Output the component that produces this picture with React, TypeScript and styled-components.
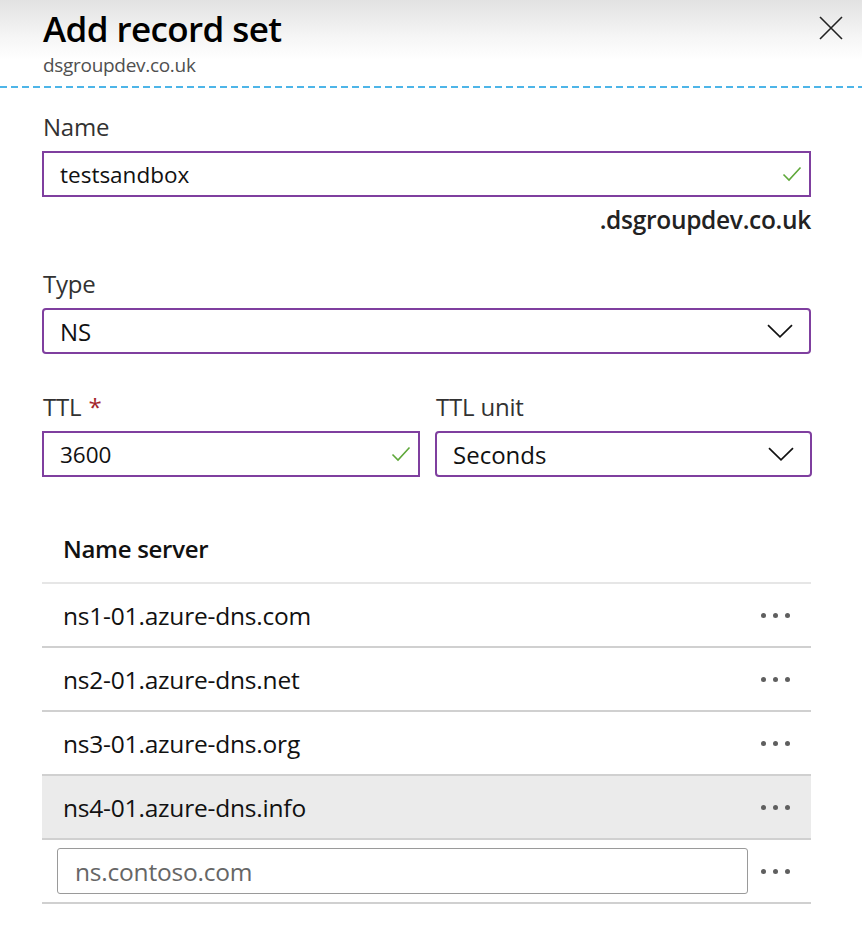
import React from "react";
import styled, { createGlobalStyle } from "styled-components";

const Global = createGlobalStyle`
  html, body { margin: 0; padding: 0; background: #fff; }
  body { font-family: "Open Sans", "Noto Sans", sans-serif; color: #000; }
  * { box-sizing: border-box; }
`;

const Page = styled.div`
  width: 862px;
  height: 934px;
  overflow: hidden;
  background: #fff;
`;

const Header = styled.header`
  display: flex;
  justify-content: space-between;
  align-items: flex-start;
  height: 86px;
  padding: 6px 18px 0 43px;
  background: linear-gradient(to bottom, #e2e2e2 0px, #f6f6f6 38px, #ffffff 60px);
`;

const TitleBlock = styled.div`
  display: flex;
  flex-direction: column;
`;

const Title = styled.h1`
  margin: 0;
  font-size: 35px;
  line-height: 46px;
  font-weight: 600;
  letter-spacing: -0.6px;
  color: #000;
`;

const Subtitle = styled.div`
  font-size: 19px;
  line-height: 27px;
  color: #505050;
  letter-spacing: -0.3px;
`;

const CloseButton = styled.button`
  border: 0;
  background: none;
  padding: 0;
  margin-top: 9px;
  width: 26px;
  height: 26px;
  display: flex;
  align-items: center;
  justify-content: center;
  cursor: pointer;
`;

const Dashed = styled.div`
  height: 2px;
  background: repeating-linear-gradient(to right, #4db5e8 0 7px, transparent 7px 11px);
`;

const Content = styled.main`
  padding: 24px 51px 0 42px;
  display: flex;
  flex-direction: column;
`;

const Field = styled.div<{ $mt?: number }>`
  display: flex;
  flex-direction: column;
  margin-top: ${(p) => p.$mt ?? 0}px;
`;

const Label = styled.label`
  font-size: 24px;
  line-height: 30px;
  color: #323232;
  margin: 0 0 9px 1px;
  letter-spacing: -0.2px;
`;

const Required = styled.span`
  color: #a4262c;
  margin-left: 7px;
`;

const Box = styled.div<{ $select?: boolean }>`
  height: 46px;
  border: 2px solid #7f3f9f;
  border-radius: ${(p) => (p.$select ? "4px" : "0")};
  display: flex;
  align-items: center;
  justify-content: space-between;
  padding: ${(p) => (p.$select ? "0 16px 0 16px" : "0 7px 0 16px")};
  font-size: ${(p) => (p.$select ? "24px" : "22.5px")};
  color: #111;
`;

const Suffix = styled.div`
  align-self: flex-end;
  font-size: 24.5px;
  font-weight: 600;
  line-height: 30px;
  color: #222;
  margin-top: 8px;
  letter-spacing: -0.3px;
`;

const Row2 = styled.div`
  display: grid;
  grid-template-columns: 378px 377px;
  column-gap: 15px;
  margin-top: 38px;
`;

const Table = styled.section`
  margin-top: 57px;
  display: flex;
  flex-direction: column;
`;

const TableHead = styled.div`
  font-size: 24px;
  font-weight: 600;
  color: #111;
  padding: 0 0 18px 21px;
  line-height: 30px;
  border-bottom: 2px solid #e6e6e6;
  letter-spacing: -0.3px;
`;

const Row = styled.div<{ $active?: boolean }>`
  height: 64px;
  display: flex;
  align-items: center;
  justify-content: space-between;
  padding: 0 19px 0 21px;
  background: ${(p) => (p.$active ? "#ebebeb" : "transparent")};
  border-bottom: 2px solid #d0d0d0;
  font-size: 24.5px;
  color: #111;
  letter-spacing: -0.2px;
`;

const InputRow = styled(Row)`
  padding: 0 19px 0 15px;
`;

const TextInput = styled.input`
  width: 691px;
  height: 46px;
  border: 1px solid #9a9a9a;
  border-radius: 3px;
  padding: 0 17px;
  font-family: inherit;
  font-size: 24.5px;
  letter-spacing: -0.2px;
  color: #111;
  outline: none;
  &::placeholder { color: #666; }
`;

const Dots = styled.div`
  display: flex;
  gap: 7px;
  margin-right: 2px;
  & > span {
    width: 5px;
    height: 5px;
    border-radius: 50%;
    background: #5f5f5f;
  }
`;

const Check = () => (
  <svg width="20" height="16" viewBox="0 0 20 16" fill="none">
    <path d="M1.5 8.5 L7 14 L18.5 1.5" stroke="#5fa83a" strokeWidth="1.6" />
  </svg>
);

const Chevron = () => (
  <svg width="26" height="14" viewBox="0 0 26 14" fill="none">
    <path d="M1 1.2 L13 12.8 L25 1.2" stroke="#111" strokeWidth="1.7" />
  </svg>
);

const More = () => (
  <Dots>
    <span />
    <span />
    <span />
  </Dots>
);

const servers = [
  "ns1-01.azure-dns.com",
  "ns2-01.azure-dns.net",
  "ns3-01.azure-dns.org",
  "ns4-01.azure-dns.info",
];

export default function App() {
  return (
    <Page>
      <Global />
      <Header>
        <TitleBlock>
          <Title>Add record set</Title>
          <Subtitle>dsgroupdev.co.uk</Subtitle>
        </TitleBlock>
        <CloseButton aria-label="Close">
          <svg width="24" height="24" viewBox="0 0 24 24" fill="none">
            <path d="M1 1 L23 23 M23 1 L1 23" stroke="#222" strokeWidth="1.6" />
          </svg>
        </CloseButton>
      </Header>
      <Dashed />
      <Content>
        <Field>
          <Label>Name</Label>
          <Box>
            <span>testsandbox</span>
            <Check />
          </Box>
          <Suffix>.dsgroupdev.co.uk</Suffix>
        </Field>
        <Field $mt={34}>
          <Label>Type</Label>
          <Box $select>
            <span>NS</span>
            <Chevron />
          </Box>
        </Field>
        <Row2>
          <Field>
            <Label>
              TTL<Required>*</Required>
            </Label>
            <Box>
              <span>3600</span>
              <Check />
            </Box>
          </Field>
          <Field>
            <Label>TTL unit</Label>
            <Box $select>
              <span>Seconds</span>
              <Chevron />
            </Box>
          </Field>
        </Row2>
        <Table>
          <TableHead>Name server</TableHead>
          {servers.map((s, i) => (
            <Row key={s} $active={i === 3}>
              <span>{s}</span>
              <More />
            </Row>
          ))}
          <InputRow>
            <TextInput placeholder="ns.contoso.com" />
            <More />
          </InputRow>
        </Table>
      </Content>
    </Page>
  );
}
